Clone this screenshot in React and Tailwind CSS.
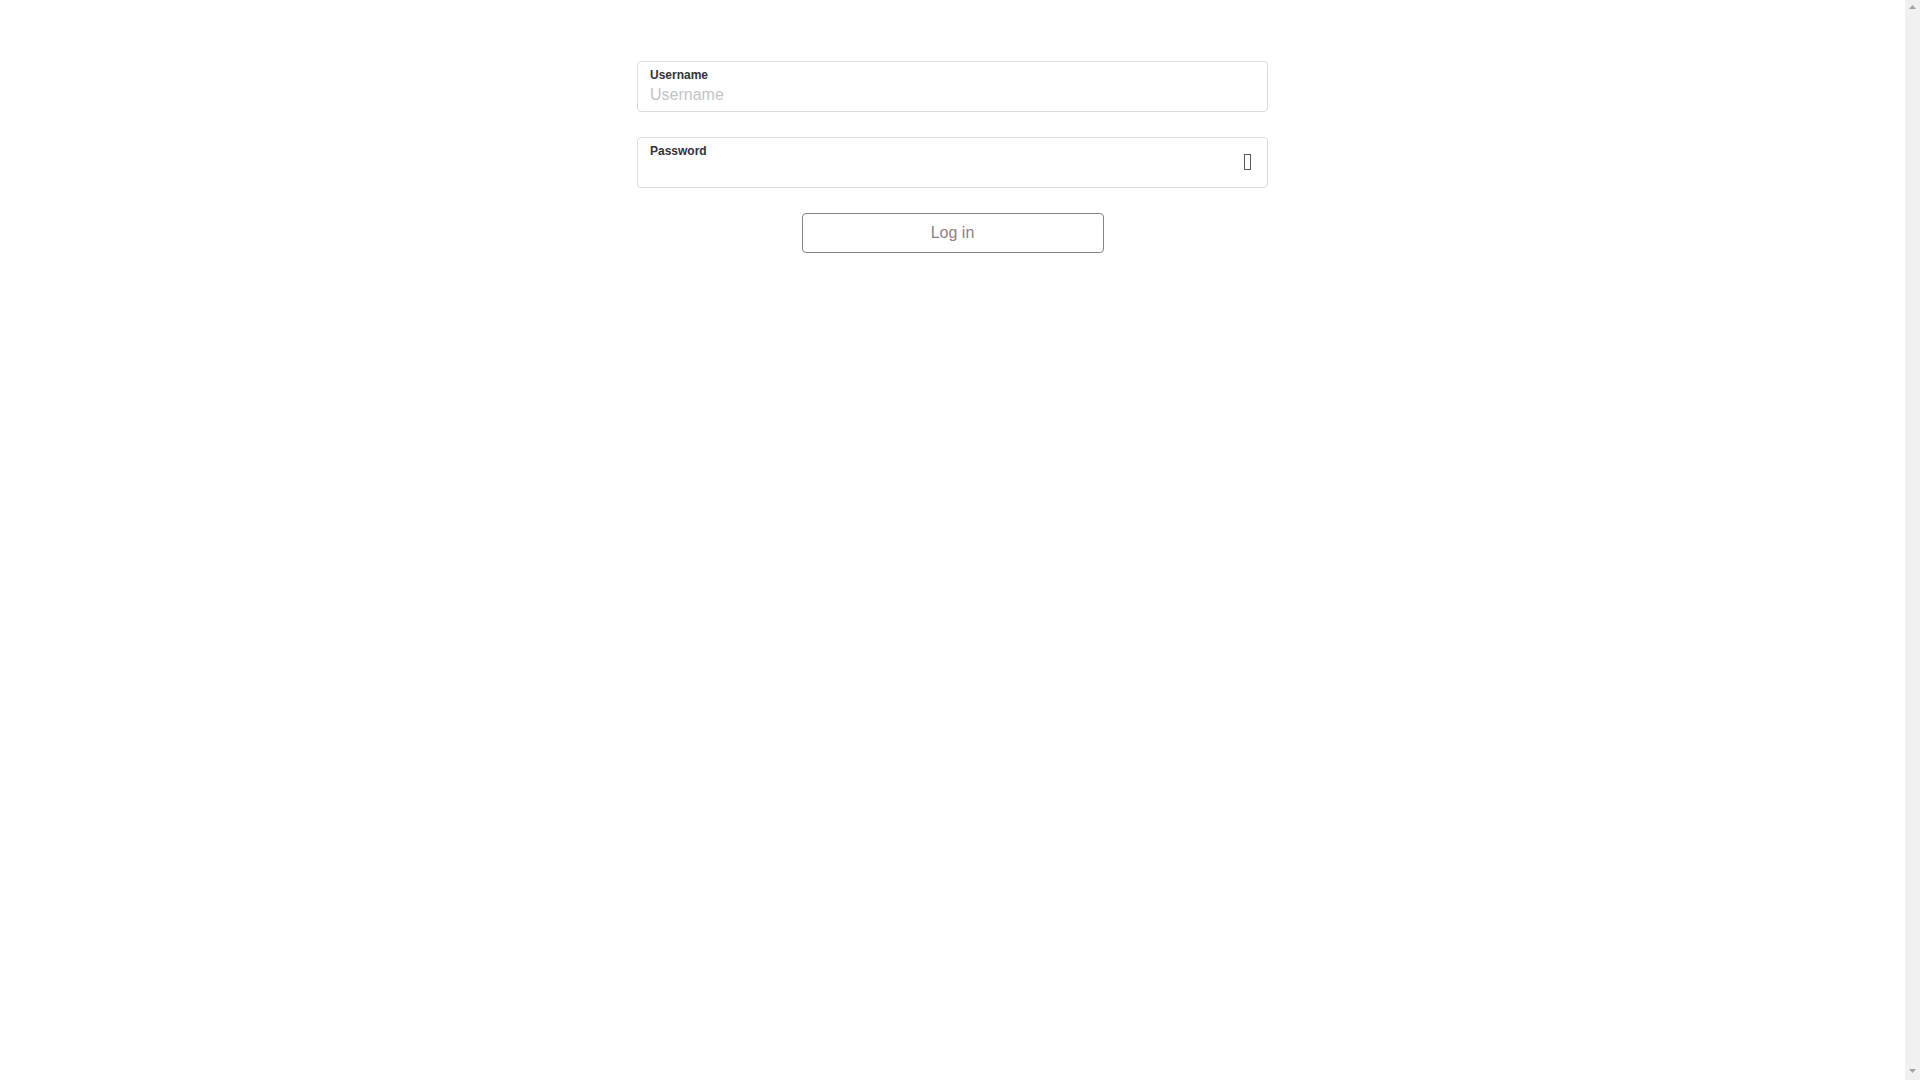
import React, { useState } from "react";

const Field = ({ label, type = "text", placeholder, icon }) => {
  const [value, setValue] = useState("");
  return (
    <div className="h-[51px] w-full rounded-[4px] border border-[#dcdcdc] bg-white pl-3 pr-4 flex flex-row items-center">
      <div className="flex-1 h-full pt-[6px] flex flex-col">
        <label className="text-[12px] leading-[14px] font-bold text-[#333333]">
          {label}
        </label>
        <input
          type={type}
          value={value}
          placeholder={placeholder}
          onChange={(e) => setValue(e.target.value)}
          className="w-full mt-[3px] text-[16px] leading-[20px] text-[#333333] placeholder:text-[#c4c4c4] outline-none bg-transparent"
        />
      </div>
      {/* eye icon font is missing, browser shows a box */}
      {icon && (
        <span className="ml-2 mt-[-2px] block w-[7px] h-[16px] border-[1.5px] border-[#5f5353]"></span>
      )}
    </div>
  );
};

// disabled browser scrollbar on the right side
const ScrollTrack = () => (
  <div className="w-[15px] h-screen bg-[#f1f1f1] flex flex-col justify-between items-center py-[5px] shrink-0">
    <svg width="7" height="4" viewBox="0 0 7 4">
      <polygon points="3.5,0 7,4 0,4" fill="#a3a3a3" />
    </svg>
    <svg width="7" height="4" viewBox="0 0 7 4" className="mb-[2px]">
      <polygon points="0,0 7,0 3.5,4" fill="#a3a3a3" />
    </svg>
  </div>
);

const App = () => {
  return (
    <div
      className="h-screen w-full overflow-hidden bg-white flex flex-row"
      style={{ fontFamily: "'Liberation Sans', Arial, sans-serif" }}
    >
      <div className="flex-1 h-screen">
        <div className="w-[631px] mx-auto pt-[61px] flex flex-col items-center gap-[25px]">
          <Field label="Username" placeholder="Username" />
          <Field label="Password" type="password" icon />
          <button className="w-[302px] h-[40px] rounded-[4px] border border-[#8c8282] bg-white text-[16px] text-[#8c8282]">
            Log in
          </button>
        </div>
      </div>
      <ScrollTrack />
    </div>
  );
};

export default App;
